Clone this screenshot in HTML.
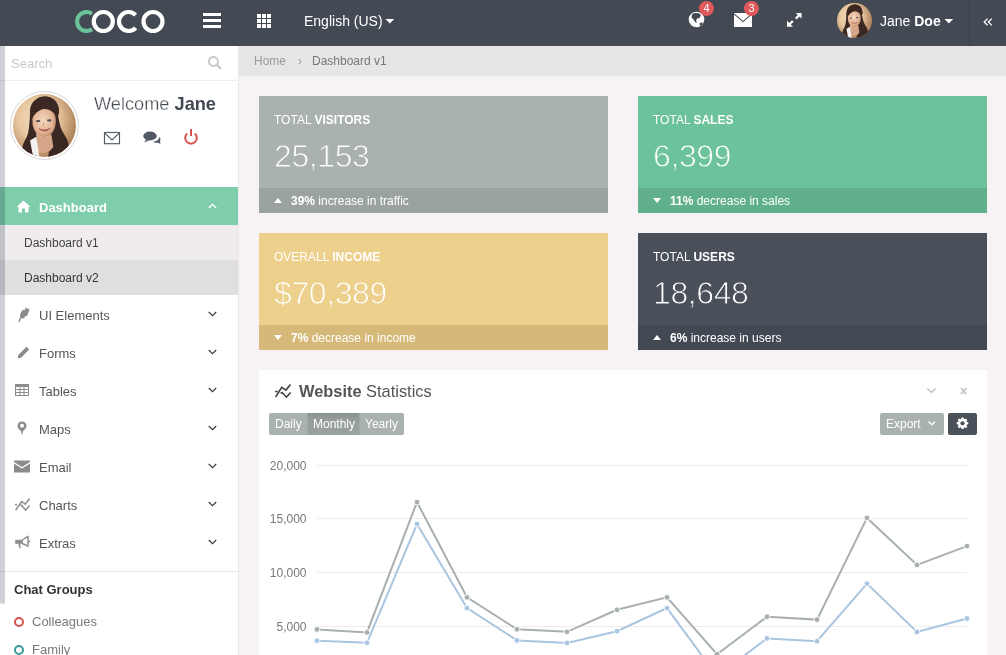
<!DOCTYPE html>
<html><head><meta charset="utf-8">
<style>
*{box-sizing:border-box;margin:0;padding:0}
html,body{width:1006px;height:655px;overflow:hidden}
body{font-family:"Liberation Sans",sans-serif;background:#f6f2f5;position:relative;color:#555}
.abs{position:absolute}
.abs,.card,.menu,.card div,.menu div{will-change:transform}
#nav{left:0;top:0;width:1006px;height:46px;background:#434a54}
#nav .t{color:#fff;font-size:14px;line-height:16px;white-space:nowrap}
#side{left:0;top:46px;width:238px;height:609px;background:#fff}
#crumb{left:239px;top:46px;width:767px;height:30px;background:#e6e6e6}
.card{position:absolute;width:349px;height:117px}
.card .lbl{position:absolute;left:15px;top:17px;font-size:12px;line-height:14px;color:#fff;white-space:nowrap}
.card .num{position:absolute;left:15px;top:42px;font-size:32px;line-height:36px;letter-spacing:-0.4px;color:#fff;white-space:nowrap}
.card .ft{position:absolute;left:0;bottom:0;width:100%;height:25px;font-size:12px;line-height:26px;color:#fff;padding-left:32px;white-space:nowrap}
.card .tri{position:absolute;left:15px;top:10px;width:0;height:0;border-left:4.5px solid transparent;border-right:4.5px solid transparent}
.menu{position:absolute;left:0;width:238px;height:38px}
.menu .mt{position:absolute;left:39px;top:13px;font-size:13px;line-height:15px;color:#555;white-space:nowrap}
.menu svg{position:absolute}
</style></head>
<body>
<svg width="0" height="0" style="position:absolute">
  <defs>
    <radialGradient id="fbg" cx="40%" cy="40%" r="65%"><stop offset="0" stop-color="#f3dfc4"/><stop offset="0.5" stop-color="#e8c79f"/><stop offset="1" stop-color="#a87a52"/></radialGradient>
    <radialGradient id="fskin" cx="45%" cy="45%" r="60%"><stop offset="0" stop-color="#f6d8c0"/><stop offset="0.7" stop-color="#e2b494"/><stop offset="1" stop-color="#b98466"/></radialGradient>
    <clipPath id="fclip"><circle cx="50" cy="50" r="50"/></clipPath>
    <symbol id="face" viewBox="0 0 100 100">
      <g clip-path="url(#fclip)">
        <rect width="100" height="100" fill="url(#fbg)"/>
        <ellipse cx="50" cy="27" rx="23" ry="23" fill="#3b2822"/>
        <path d="M28 30 C25 45 27 58 21 70 C15 80 12 90 17 100 L38 100 L37 60Z" fill="#3b2822"/>
        <path d="M66 20 C74 34 72 50 80 62 C88 74 93 88 88 100 L56 100 L60 58Z" fill="#3b2822"/>
        <path d="M31 40 C31 27 40 20 50 21 C61 22 68 29 68 42 C68 55 63 66 51 68 C41 69 33 60 31 48Z" fill="url(#fskin)"/>
        <path d="M38 64 C44 70 56 70 61 64 L64 84 C58 94 46 96 38 90Z" fill="#d4a587"/>
        <path d="M27 74 L37 68 L42 100 L32 100Z" fill="#f4f2f0"/>
        <path d="M27 40 C25 18 38 4 52 4 C67 5 75 17 72 32 L69 35 C63 27 56 23 48 24 C40 26 34 32 30 40Z" fill="#3b2822"/>
        <ellipse cx="40" cy="43" rx="3.6" ry="1.8" fill="#4c4a52"/>
        <ellipse cx="57.5" cy="42" rx="3.6" ry="1.8" fill="#4c4a52"/>
        <path d="M41 55 C46 60 54 60 59 54 C54 58 46 58 41 55Z" fill="#fff" stroke="#a45a4c" stroke-width="1.6"/>
        <path d="M49 45 C48 48 47 51 50 52" fill="none" stroke="#c28f74" stroke-width="1.2"/>
      </g>
    </symbol>
  </defs>
</svg>
<!-- NAVBAR -->
<div id="nav" class="abs">
  <svg class="abs" style="left:0;top:0" width="240" height="46">
    <path d="M92 13.7 A9.5 9.5 0 1 0 92 29.3" fill="none" stroke="#6cc39b" stroke-width="4.2"/>
    <circle cx="103.3" cy="21.5" r="9.5" fill="none" stroke="#fff" stroke-width="4.2"/>
    <path d="M135.6 15.2 A9.5 9.5 0 1 0 135.6 27.8" fill="none" stroke="#fff" stroke-width="4.2"/>
    <circle cx="153" cy="21.5" r="9.5" fill="none" stroke="#fff" stroke-width="4.2"/>
    <rect x="203" y="13" width="18" height="3" fill="#fff"/>
    <rect x="203" y="19" width="18" height="3" fill="#fff"/>
    <rect x="203" y="25" width="18" height="3" fill="#fff"/>
  </svg>
  <svg class="abs" style="left:257px;top:14px" width="14" height="14">
    <g fill="#fff">
    <rect x="0" y="0" width="4" height="4"/><rect x="5" y="0" width="4" height="4"/><rect x="10" y="0" width="4" height="4"/>
    <rect x="0" y="5" width="4" height="4"/><rect x="5" y="5" width="4" height="4"/><rect x="10" y="5" width="4" height="4"/>
    <rect x="0" y="10" width="4" height="4"/><rect x="5" y="10" width="4" height="4"/><rect x="10" y="10" width="4" height="4"/>
    </g>
  </svg>
  <div class="abs t" style="left:304px;top:13.4px">English (US)</div>
  <svg class="abs" style="left:385px;top:18px" width="10" height="6"><path d="M0.5 1 H9.2 L4.85 5.4Z" fill="#fff"/></svg>
  <svg class="abs" style="left:680px;top:0" width="130" height="46">
    <!-- globe -->
    <circle cx="16.5" cy="19.5" r="7.8" fill="#fff"/>
    <path d="M12 14.5 C14 12.8 17 12.6 19.5 13.6 L21 15.5 L19 18.5 L17.5 18 L16 20.5 L17 23 L15 22 L13.5 19.5 L11.5 17.5Z" fill="#434a54"/>
    <path d="M19.5 23.5 L22.5 22 L22 25 L20 26Z" fill="#434a54"/>
    <!-- badge 4 -->
    <circle cx="26.5" cy="8.5" r="7.5" fill="#e0585a"/>
    <!-- envelope -->
    <rect x="54" y="13" width="18" height="14" rx="0.5" fill="#fff"/>
    <path d="M54 13.8 L63 21.6 L72 13.8" fill="none" stroke="#434a54" stroke-width="1.1"/>
    <!-- badge 3 -->
    <circle cx="71.5" cy="8.5" r="7.5" fill="#e0585a"/>
    <!-- expand -->
    <g fill="#fff">
      <path d="M115.8 12.9 H121.5 V18.6Z"/>
      <path d="M107 20.8 V26.8 H113Z"/>
    </g>
    <path d="M119.2 15.2 L115.8 18.6 M109.3 24.5 L112.8 21" stroke="#fff" stroke-width="2.3"/>
  </svg>
  <div class="abs" style="left:699px;top:1px;width:15px;height:15px;font-size:11px;line-height:15px;text-align:center;color:#fff">4</div>
  <div class="abs" style="left:744px;top:1px;width:15px;height:15px;font-size:11px;line-height:15px;text-align:center;color:#fff">3</div>
  <!-- avatar -->
  <svg class="abs" style="left:837px;top:3px" width="35" height="35" viewBox="0 0 100 100"><use href="#face"/></svg>
  <div class="abs t" style="left:880px;top:13px">Jane <b>Doe</b></div>
  <svg class="abs" style="left:944px;top:18px" width="10" height="6"><path d="M0.5 1 H9.2 L4.85 5.4Z" fill="#fff"/></svg>
  <div class="abs" style="left:969px;top:0;width:1px;height:46px;background:#3a4049"></div>
  <svg class="abs" style="left:983px;top:18px" width="10" height="8"><path d="M4.6 0.6 L1.2 4 L4.6 7.4 M8.8 0.6 L5.4 4 L8.8 7.4" fill="none" stroke="#fff" stroke-width="1.3"/></svg>
</div>
<!-- SIDEBAR -->
<div id="side" class="abs">
  <div class="abs" style="left:11px;top:10px;font-size:13px;line-height:15px;color:#c8c8c8">Search</div>
  <svg class="abs" style="left:207px;top:9px" width="16" height="16"><circle cx="6.45" cy="6.45" r="4.5" fill="none" stroke="#c8c8c8" stroke-width="1.9"/><path d="M9.8 9.8 L13.3 13.3" stroke="#c8c8c8" stroke-width="2.2" stroke-linecap="round"/></svg>
  <div class="abs" style="left:0;top:34px;width:238px;height:1px;background:#eeeeee"></div>
  <!-- big avatar -->
  <div class="abs" style="left:10px;top:45px;width:69px;height:69px;border-radius:50%;background:#fff;border:1px solid #d6d6d6"></div>
  <svg class="abs" style="left:13px;top:48px" width="63" height="63" viewBox="0 0 100 100"><use href="#face"/></svg>
  <div class="abs" style="left:94px;top:48px;font-size:18.2px;line-height:20px;color:#434a54;white-space:nowrap"><span style="-webkit-text-stroke:0.3px #fff">Welcome</span> <b>Jane</b></div>
  <!-- envelope outline -->
  <svg class="abs" style="left:103px;top:85px" width="19" height="14"><rect x="1.5" y="1.5" width="15" height="11.2" fill="none" stroke="#535a66" stroke-width="1.15"/><path d="M2 2.3 L9 9 L16 2.3" fill="none" stroke="#535a66" stroke-width="1.15"/></svg>
  <!-- chat -->
  <svg class="abs" style="left:143px;top:85px" width="19" height="14"><ellipse cx="7" cy="5" rx="6.8" ry="4.4" fill="#535a66"/><path d="M3 8 L1.5 11.5 L6.5 9Z" fill="#535a66"/><path d="M10 10.5 C13 10.5 16 9 16.3 6 C17.5 7 18 8.5 17 10 L17.5 13 L14.5 11.5 C13 12 11 11.7 10 10.5Z" fill="#535a66"/></svg>
  <!-- power -->
  <svg class="abs" style="left:183px;top:82px" width="16" height="17"><path d="M4.2 5.5 A5.8 5.8 0 1 0 11.8 5.5" fill="none" stroke="#d9534f" stroke-width="2"/><path d="M8 1 V8" stroke="#d9534f" stroke-width="2"/></svg>
  <!-- Dashboard active -->
  <div class="abs" style="left:0;top:141px;width:238px;height:38px;background:#7ecdab"></div>
  <svg class="abs" style="left:16px;top:154px" width="15" height="13"><path d="M7.5 0.5 L14.5 7 H12.5 V12.5 H9 V8.5 H6 V12.5 H2.5 V7 H0.5Z" fill="#fff"/></svg>
  <div class="abs" style="left:39px;top:154px;font-size:13px;line-height:15px;color:#fff;font-weight:bold;white-space:nowrap">Dashboard</div>
  <svg class="abs" style="left:208px;top:157px" width="9" height="6"><path d="M0.8 5 L4.5 1.3 L8.2 5" fill="none" stroke="#fff" stroke-width="1.3"/></svg>
  <div class="abs" style="left:0;top:179px;width:238px;height:35px;background:#efebee"></div>
  <div class="abs" style="left:24px;top:190px;font-size:12px;line-height:14px;color:#444;white-space:nowrap">Dashboard v1</div>
  <div class="abs" style="left:0;top:214px;width:238px;height:35px;background:#dfdfdf"></div>
  <div class="abs" style="left:24px;top:225px;font-size:12px;line-height:14px;color:#333;white-space:nowrap">Dashboard v2</div>
  <div class="menu" style="top:249px"><svg class="abs" style="left:17px;top:12px" width="14" height="16"><path d="M2 14.8 L4.2 9.5" stroke="#8c8c8c" stroke-width="1.4"/><path d="M3.3 11 C2.6 8 3.6 4.5 6.5 2.6 L7.4 3.6 L8.3 1.2 L10 0.6 L9.8 2.2 L12.3 1.3 C12.6 3.5 11.8 5.5 10.6 6.8 L11.3 7.2 C10.3 8.8 8.5 9.6 7.3 9.8 L8 10.5 C6.6 11.5 4.8 11.6 3.3 11Z" fill="#8c8c8c"/></svg><div class="mt">UI Elements</div><svg class="abs" style="left:208px;top:16px" width="9" height="6"><path d="M0.8 1 L4.5 4.7 L8.2 1" fill="none" stroke="#3a3a3a" stroke-width="1.15"/></svg></div>
  <div class="menu" style="top:287px"><svg class="abs" style="left:17px;top:13px" width="13" height="13"><path d="M9.5 0.8 L12.2 3.5 L4 11.7 L0.8 12.2 L1.3 9Z" fill="#8c8c8c"/></svg><div class="mt">Forms</div><svg class="abs" style="left:208px;top:16px" width="9" height="6"><path d="M0.8 1 L4.5 4.7 L8.2 1" fill="none" stroke="#3a3a3a" stroke-width="1.15"/></svg></div>
  <div class="menu" style="top:325px"><svg class="abs" style="left:15px;top:13px" width="14" height="12"><rect x="0.5" y="0.5" width="13" height="11" fill="none" stroke="#8c8c8c" stroke-width="1"/><rect x="0.5" y="0.5" width="13" height="2.5" fill="#8c8c8c"/><path d="M0.5 5.5 H13.5 M0.5 8.5 H13.5 M5 0.5 V11.5 M9 0.5 V11.5" stroke="#8c8c8c" stroke-width="1"/></svg><div class="mt">Tables</div><svg class="abs" style="left:208px;top:16px" width="9" height="6"><path d="M0.8 1 L4.5 4.7 L8.2 1" fill="none" stroke="#3a3a3a" stroke-width="1.15"/></svg></div>
  <div class="menu" style="top:363px"><svg class="abs" style="left:17px;top:12px" width="10" height="15"><path d="M5 0.5 C2.3 0.5 0.5 2.5 0.5 5 C0.5 7.5 3 9.5 4 10 L5 14.5 L6 10 C7 9.5 9.5 7.5 9.5 5 C9.5 2.5 7.7 0.5 5 0.5Z M5 2.8 A2 2 0 1 1 5 6.8 A2 2 0 1 1 5 2.8Z" fill="#8c8c8c" fill-rule="evenodd"/></svg><div class="mt">Maps</div><svg class="abs" style="left:208px;top:16px" width="9" height="6"><path d="M0.8 1 L4.5 4.7 L8.2 1" fill="none" stroke="#3a3a3a" stroke-width="1.15"/></svg></div>
  <div class="menu" style="top:401px"><svg class="abs" style="left:14px;top:13px" width="16" height="13"><path d="M0 0.5 H16 V2 L8 7 L0 2Z" fill="#8c8c8c"/><path d="M0 3.5 L8 8.5 L16 3.5 V12.5 H0Z" fill="#8c8c8c"/></svg><div class="mt">Email</div><svg class="abs" style="left:208px;top:16px" width="9" height="6"><path d="M0.8 1 L4.5 4.7 L8.2 1" fill="none" stroke="#3a3a3a" stroke-width="1.15"/></svg></div>
  <div class="menu" style="top:439px"><svg class="abs" style="left:14px;top:12px" width="17" height="16"><path d="M1.5 13.4 L7.7 4.5 L11.3 7.2 L15.5 1.5 M6.5 9 L7.5 8.3 L11.6 13.2 L15.5 8.6 M1.1 7.3 L2.9 8.1" fill="none" stroke="#8c8c8c" stroke-width="1.5"/></svg><div class="mt">Charts</div><svg class="abs" style="left:208px;top:16px" width="9" height="6"><path d="M0.8 1 L4.5 4.7 L8.2 1" fill="none" stroke="#3a3a3a" stroke-width="1.15"/></svg></div>
  <div class="menu" style="top:477px"><svg class="abs" style="left:15px;top:12px" width="17" height="15"><rect x="0.2" y="4.8" width="6.6" height="4" fill="#8c8c8c"/><path d="M7.2 5 L13 1.3 V11.2 L7.2 8.5Z" fill="none" stroke="#8c8c8c" stroke-width="1.4" stroke-linejoin="round"/><rect x="13.6" y="5.4" width="1.4" height="2" fill="#8c8c8c"/><path d="M3.4 8.5 L4.4 13.2 H5.8 L5.2 8.5Z" fill="#8c8c8c"/></svg><div class="mt">Extras</div><svg class="abs" style="left:208px;top:16px" width="9" height="6"><path d="M0.8 1 L4.5 4.7 L8.2 1" fill="none" stroke="#3a3a3a" stroke-width="1.15"/></svg></div>
  
  <div class="abs" style="left:0;top:525px;width:238px;height:1px;background:#e6e6e6"></div>
  <div class="abs" style="left:14px;top:536px;font-size:13px;line-height:15px;color:#333;font-weight:bold;white-space:nowrap">Chat Groups</div>
  <div class="abs" style="left:14px;top:571px;width:10px;height:10px;border-radius:50%;border:2px solid #d9534f"></div>
  <div class="abs" style="left:32px;top:568px;font-size:13px;line-height:15px;color:#7a7a7a;white-space:nowrap">Colleagues</div>
  <div class="abs" style="left:14px;top:599px;width:10px;height:10px;border-radius:50%;border:2px solid #3a9a9a"></div>
  <div class="abs" style="left:32px;top:596px;font-size:13px;line-height:15px;color:#7a7a7a;white-space:nowrap">Family</div>
  <div class="abs" style="left:0;top:0;width:5px;height:558px;background:rgba(20,25,50,0.2);border-radius:0 0 3px 3px"></div>
</div>
<div class="abs" style="left:238px;top:46px;width:1px;height:609px;background:#e9e7e9"></div>
<!-- BREADCRUMB -->
<div id="crumb" class="abs">
  <div class="abs" style="left:15px;top:8px;font-size:12px;line-height:14px;color:#999">Home</div>
  <div class="abs" style="left:59px;top:8px;font-size:12px;line-height:14px;color:#999">›</div>
  <div class="abs" style="left:73px;top:8px;font-size:12px;line-height:14px;color:#777">Dashboard v1</div>
</div>
<!-- CARDS -->
<div class="card" style="left:259px;top:96px;background:#aab2b1">
  <div class="lbl">TOTAL <b>VISITORS</b></div>
  <div class="num" style="-webkit-text-stroke:0.9px #aab2b1">25,153</div>
  <div class="ft" style="background:#9ba3a2"><span class="tri" style="border-bottom:5px solid #fff;top:10px"></span><b>39%</b> increase in traffic</div>
</div>
<div class="card" style="left:638px;top:96px;background:#6cc39b">
  <div class="lbl">TOTAL <b>SALES</b></div>
  <div class="num" style="-webkit-text-stroke:0.9px #6cc39b">6,399</div>
  <div class="ft" style="background:#5fb08b"><span class="tri" style="border-top:5px solid #fff;top:10px"></span><b>11%</b> decrease in sales</div>
</div>
<div class="card" style="left:259px;top:233px;background:#ecd08c">
  <div class="lbl">OVERALL <b>INCOME</b></div>
  <div class="num" style="-webkit-text-stroke:0.9px #ecd08c">$70,389</div>
  <div class="ft" style="background:#d6b979"><span class="tri" style="border-top:5px solid #fff;top:10px"></span><b>7%</b> decrease in income</div>
</div>
<div class="card" style="left:638px;top:233px;background:#4a505a">
  <div class="lbl">TOTAL <b>USERS</b></div>
  <div class="num" style="-webkit-text-stroke:0.9px #4a505a">18,648</div>
  <div class="ft" style="background:#434952"><span class="tri" style="border-bottom:5px solid #fff;top:10px"></span><b>6%</b> increase in users</div>
</div>
<!-- PANEL -->
<div class="abs" style="left:259px;top:370px;width:728px;height:300px;background:#fff"></div>
<svg class="abs" style="left:0;top:0" width="1006" height="655">
  <!-- header icon -->
  <path d="M275.7 397 L281.7 387.3 L285.9 390.1 L290.5 384.4 M280.6 393.4 L282.1 392.5 L286.5 397 L290.7 392.5 M275.1 391.5 H277.7" fill="none" stroke="#444" stroke-width="1.6"/>
  <!-- collapse / close -->
  <path d="M927.3 388.6 L931.5 392.4 L935.8 388.2" fill="none" stroke="#c8c8c8" stroke-width="1.5"/>
  <path d="M961 388 L966.3 394.2 M966.3 388 L961 394.2" fill="none" stroke="#c8c8c8" stroke-width="1.9"/>
  <!-- buttons -->
  <rect x="269" y="413" width="135" height="22" rx="2" fill="#aab2b1"/>
  <linearGradient id="mg" x1="0" y1="0" x2="0" y2="1"><stop offset="0" stop-color="#89918f"/><stop offset="0.25" stop-color="#959d9c"/><stop offset="1" stop-color="#9aa2a2"/></linearGradient>
  <rect x="307.5" y="413" width="52" height="22" fill="url(#mg)"/>
  <rect x="880" y="413" width="64" height="22" rx="2" fill="#aab2b1"/>
  <path d="M928.5 421.5 L931.8 424.8 L935.1 421.5" fill="none" stroke="#fff" stroke-width="1.3"/>
  <rect x="948" y="413" width="29" height="22" rx="2" fill="#4a505a"/>
  <path d="M961.18,419.00 L961.48,417.49 L963.52,417.49 L963.82,419.00 L964.61,419.33 L965.88,418.47 L967.33,419.92 L966.47,421.19 L966.80,421.98 L968.31,422.28 L968.31,424.32 L966.80,424.62 L966.47,425.41 L967.33,426.68 L965.88,428.13 L964.61,427.27 L963.82,427.60 L963.52,429.11 L961.48,429.11 L961.18,427.60 L960.39,427.27 L959.12,428.13 L957.67,426.68 L958.53,425.41 L958.20,424.62 L956.69,424.32 L956.69,422.28 L958.20,421.98 L958.53,421.19 L957.67,419.92 L959.12,418.47 L960.39,419.33Z" fill="#fff"/>
  <circle cx="962.5" cy="423.3" r="2.1" fill="#4a505a"/>
  <!-- grid -->
  <g stroke="#f0eaec" stroke-width="1">
    <path d="M317 465.5 H967 M317 518.5 H967 M317 572.5 H967 M317 626.5 H967"/>
  </g>
  <g font-family="Liberation Sans" font-size="12" fill="#777" text-anchor="end">
    <text x="306.5" y="470">20,000</text>
    <text x="306.5" y="523">15,000</text>
    <text x="306.5" y="577">10,000</text>
    <text x="306.5" y="631">5,000</text>
  </g>
  <polyline points="317,629.4 367,632.4 417,502.1 467,597.3 517,629.3 567,631.8 617,609.8 667,597.3 717,654.2 767,616.7 817,619.6 867,517.9 917,564.9 967,546.1" fill="none" stroke="#a8b0af" stroke-width="2"/>
  <circle cx="317" cy="629.4" r="2.9" fill="#a8b0af" stroke="#fff" stroke-width="0.9"/><circle cx="367" cy="632.4" r="2.9" fill="#a8b0af" stroke="#fff" stroke-width="0.9"/><circle cx="417" cy="502.1" r="2.9" fill="#a8b0af" stroke="#fff" stroke-width="0.9"/><circle cx="467" cy="597.3" r="2.9" fill="#a8b0af" stroke="#fff" stroke-width="0.9"/><circle cx="517" cy="629.3" r="2.9" fill="#a8b0af" stroke="#fff" stroke-width="0.9"/><circle cx="567" cy="631.8" r="2.9" fill="#a8b0af" stroke="#fff" stroke-width="0.9"/><circle cx="617" cy="609.8" r="2.9" fill="#a8b0af" stroke="#fff" stroke-width="0.9"/><circle cx="667" cy="597.3" r="2.9" fill="#a8b0af" stroke="#fff" stroke-width="0.9"/><circle cx="717" cy="654.2" r="2.9" fill="#a8b0af" stroke="#fff" stroke-width="0.9"/><circle cx="767" cy="616.7" r="2.9" fill="#a8b0af" stroke="#fff" stroke-width="0.9"/><circle cx="817" cy="619.6" r="2.9" fill="#a8b0af" stroke="#fff" stroke-width="0.9"/><circle cx="867" cy="517.9" r="2.9" fill="#a8b0af" stroke="#fff" stroke-width="0.9"/><circle cx="917" cy="564.9" r="2.9" fill="#a8b0af" stroke="#fff" stroke-width="0.9"/><circle cx="967" cy="546.1" r="2.9" fill="#a8b0af" stroke="#fff" stroke-width="0.9"/>
  <polyline points="317,640.7 367,642.8 417,524 467,608.1 517,640.4 567,642.9 617,631.2 667,608.1 717,676 767,638.4 817,641.2 867,583.6 917,632 967,618.5" fill="none" stroke="#a9c5e0" stroke-width="2"/>
  <circle cx="317" cy="640.7" r="2.9" fill="#a9c5e0" stroke="#fff" stroke-width="0.9"/><circle cx="367" cy="642.8" r="2.9" fill="#a9c5e0" stroke="#fff" stroke-width="0.9"/><circle cx="417" cy="524" r="2.9" fill="#a9c5e0" stroke="#fff" stroke-width="0.9"/><circle cx="467" cy="608.1" r="2.9" fill="#a9c5e0" stroke="#fff" stroke-width="0.9"/><circle cx="517" cy="640.4" r="2.9" fill="#a9c5e0" stroke="#fff" stroke-width="0.9"/><circle cx="567" cy="642.9" r="2.9" fill="#a9c5e0" stroke="#fff" stroke-width="0.9"/><circle cx="617" cy="631.2" r="2.9" fill="#a9c5e0" stroke="#fff" stroke-width="0.9"/><circle cx="667" cy="608.1" r="2.9" fill="#a9c5e0" stroke="#fff" stroke-width="0.9"/><circle cx="717" cy="676" r="2.9" fill="#a9c5e0" stroke="#fff" stroke-width="0.9"/><circle cx="767" cy="638.4" r="2.9" fill="#a9c5e0" stroke="#fff" stroke-width="0.9"/><circle cx="817" cy="641.2" r="2.9" fill="#a9c5e0" stroke="#fff" stroke-width="0.9"/><circle cx="867" cy="583.6" r="2.9" fill="#a9c5e0" stroke="#fff" stroke-width="0.9"/><circle cx="917" cy="632" r="2.9" fill="#a9c5e0" stroke="#fff" stroke-width="0.9"/><circle cx="967" cy="618.5" r="2.9" fill="#a9c5e0" stroke="#fff" stroke-width="0.9"/>
</svg>
<div class="abs" style="left:299px;top:382px;font-size:16.4px;line-height:18px;color:#555;white-space:nowrap"><b>Website</b> Statistics</div>
<div class="abs" style="left:275px;top:417px;font-size:12px;line-height:14px;color:#fff;white-space:nowrap">Daily</div>
<div class="abs" style="left:313px;top:417px;font-size:12px;line-height:14px;color:#fff;white-space:nowrap">Monthly</div>
<div class="abs" style="left:365px;top:417px;font-size:12px;line-height:14px;color:#fff;white-space:nowrap">Yearly</div>
<div class="abs" style="left:886px;top:417px;font-size:12px;line-height:14px;color:#fff;white-space:nowrap">Export</div>

</body></html>
